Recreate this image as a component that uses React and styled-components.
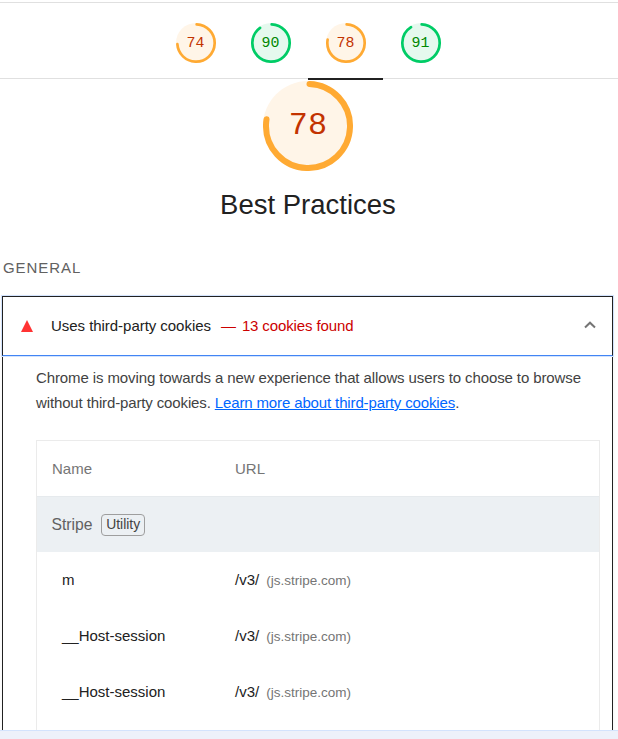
import React from 'react';
import styled, { createGlobalStyle } from 'styled-components';

const GlobalStyle = createGlobalStyle`
  * { box-sizing: border-box; }
  body { margin: 0; background: #fff; overflow: hidden; }
`;

const Page = styled.div`
  display: flex;
  flex-direction: column;
  height: 739px;
  width: 618px;
  overflow: hidden;
  color: #212121;
  font: 15px/25px 'Liberation Sans', Arial, sans-serif;
`;

const Report = styled.main`
  flex: 1;
  min-height: 0;
  overflow: hidden;
  padding-top: 2px;
`;

const ScoreBar = styled.nav`
  display: flex;
  justify-content: center;
  height: 77px;
  padding-right: 2px;
  border-top: 1px solid #e0e0e0;
  border-bottom: 1px solid #e0e0e0;
`;

const ScoreTab = styled.a`
  display: flex;
  justify-content: center;
  width: 75px;
  height: 77px;
  padding-top: 20px;
  border-bottom: 2px solid ${(p) => (p.$active ? '#212121' : 'transparent')};
`;

const tones = {
  average: { arc: '#fa3', fill: '#fff5e8', text: '#c33300' },
  pass: { arc: '#0c6', fill: '#e5f9ee', text: '#008800' },
};

const GaugeBox = styled.div`
  display: grid;
  flex: none;
  place-items: center;
  width: ${(p) => p.$size}px;
  height: ${(p) => p.$size}px;
  > * { grid-area: 1 / 1; }
`;

const GaugeSvg = styled.svg`
  display: block;
  width: 100%;
  height: 100%;
`;

const GaugeScore = styled.span`
  font-family: 'Liberation Mono', 'Courier New', monospace;
  font-size: ${(p) => p.$size * 0.34 + 1.3}px;
  line-height: 1;
  color: ${(p) => p.$color};
`;

function Gauge({ score, size, tone }) {
  const t = tones[tone];
  const length = 2 * Math.PI * 56;
  return (
    <GaugeBox $size={size}>
      <GaugeSvg viewBox="0 0 120 120">
        <circle cx="60" cy="60" r="60" fill={t.fill} />
        <circle
          cx="60"
          cy="60"
          r="56"
          fill="none"
          stroke={t.arc}
          strokeWidth="8"
          strokeLinecap="round"
          strokeDasharray={`${(score / 100) * length - 4} ${length}`}
          transform="rotate(-87.95 60 60)"
        />
      </GaugeSvg>
      <GaugeScore $size={size} $color={t.text}>{score}</GaugeScore>
    </GaugeBox>
  );
}

const CategoryHeader = styled.header`
  display: flex;
  flex-direction: column;
  align-items: center;
  padding: 2px 2px 0 0;
`;

const CategoryTitle = styled.h1`
  margin: 14px 0 0;
  font-size: 27.5px;
  font-weight: 400;
  line-height: 40px;
`;

const GroupTitle = styled.h2`
  margin: 30px 0 0 3px;
  font-size: 15px;
  font-weight: 400;
  line-height: 25px;
  letter-spacing: 0.95px;
  text-transform: uppercase;
  color: #616161;
`;

const Audit = styled.section`
  width: 611px;
  height: 460px;
  margin: 16px 0 0 2px;
  border: 1px solid #212121;
  box-shadow: 0 0 4px rgba(0, 0, 0, 0.05);
`;

const AuditSummary = styled.div`
  display: flex;
  align-items: center;
  height: 60px;
  margin: -1px -1px 0;
  padding: 0 16px 0 18px;
  border: 1px solid #212121;
  border-bottom-color: #4285f4;
  box-shadow: 0 0 0 1px #d3e3fd;
`;

const FailIcon = styled.svg`
  width: 12px;
  height: 12px;
  margin-right: 18px;
`;

const AuditTitle = styled.span`
  padding-bottom: 2px;
  letter-spacing: -0.04px;
`;

const DisplayValue = styled.span`
  margin-left: 10px;
  padding-bottom: 2px;
  color: #c00;
  letter-spacing: -0.12px;
  white-space: nowrap;
`;

const Dash = styled.span`
  margin-right: 2px;
`;

const Chevron = styled.svg`
  width: 12px;
  height: 8px;
  margin: 0 0 2px auto;
`;

const AuditBody = styled.div`
  padding: 9px 12px 0 33px;
`;

const Description = styled.div`
  margin: 0 0 25px;
  color: #424242;
`;

const Line = styled.div`
  white-space: nowrap;
  letter-spacing: ${(p) => p.$spacing}px;
`;

const Link = styled.a`
  color: #06f;
  text-decoration: underline;
`;

const Table = styled.div`
  height: 400px;
  border: 1px solid #ebebeb;
`;

const Row = styled.div`
  display: grid;
  grid-template-columns: 183px 1fr;
  align-items: center;
  height: 56px;
  padding-left: 15px;
`;

const HeadRow = styled(Row)`
  border-bottom: 1px solid #e6eaed;
  color: #757575;
`;

const EntityRow = styled(Row)`
  display: flex;
  height: 55px;
  background: #ecf0f3;
`;

const Entity = styled.span`
  margin: 0 0 1px -0.5px;
  color: #616161;
  font-size: 15.7px;
`;

const Tag = styled.span`
  height: 22px;
  margin: 1px 0 0 8.7px;
  padding: 0 4px;
  border: 1px solid #9e9e9e;
  border-radius: 4px;
  color: #424242;
  font-size: 13.9px;
  line-height: 19px;
`;

const Name = styled.span`
  padding: 0 0 2px 10px;
`;

const Url = styled.span`
  display: flex;
  align-items: baseline;
`;

const Host = styled.span`
  margin-left: 7px;
  color: #757575;
  font-size: 13.5px;
`;

const BottomStrip = styled.footer`
  flex: none;
  height: 9px;
  border-top: 1px solid #d3e3fd;
  background: #edf1fa;
`;

const scores = [
  { score: 74, tone: 'average' },
  { score: 90, tone: 'pass' },
  { score: 78, tone: 'average', active: true },
  { score: 91, tone: 'pass' },
];

const cookies = ['m', '__Host-session', '__Host-session'];

export default function App() {
  return (
    <Page>
      <GlobalStyle />
      <Report>
        <ScoreBar>
          {scores.map((s) => (
            <ScoreTab key={s.score} $active={s.active}>
              <Gauge score={s.score} tone={s.tone} size={40} />
            </ScoreTab>
          ))}
        </ScoreBar>
        <CategoryHeader>
          <Gauge score={78} tone="average" size={90} />
          <CategoryTitle>Best Practices</CategoryTitle>
        </CategoryHeader>
        <GroupTitle>General</GroupTitle>
        <Audit>
          <AuditSummary>
            <FailIcon viewBox="0 0 12 12"><path d="M6 0L12 12H0Z" fill="#f33" /></FailIcon>
            <AuditTitle>Uses third-party cookies</AuditTitle>
            <DisplayValue><Dash>—</Dash> 13 cookies found</DisplayValue>
            <Chevron viewBox="0 0 12 8">
              <path d="M1 6.5L6 1.7L11 6.5" fill="none" stroke="#757575" strokeWidth="2" />
            </Chevron>
          </AuditSummary>
          <AuditBody>
            <Description>
              <Line $spacing={-0.11}>
                Chrome is moving towards a new experience that allows users to choose to browse
              </Line>
              <Line $spacing={-0.132}>
                without third-party cookies. <Link>Learn more about third-party cookies</Link>.
              </Line>
            </Description>
            <Table>
              <HeadRow><span>Name</span><span>URL</span></HeadRow>
              <EntityRow><Entity>Stripe</Entity><Tag>Utility</Tag></EntityRow>
              {cookies.map((name, i) => (
                <Row key={i}>
                  <Name>{name}</Name>
                  <Url>/v3/<Host>(js.stripe.com)</Host></Url>
                </Row>
              ))}
            </Table>
          </AuditBody>
        </Audit>
      </Report>
      <BottomStrip />
    </Page>
  );
}
